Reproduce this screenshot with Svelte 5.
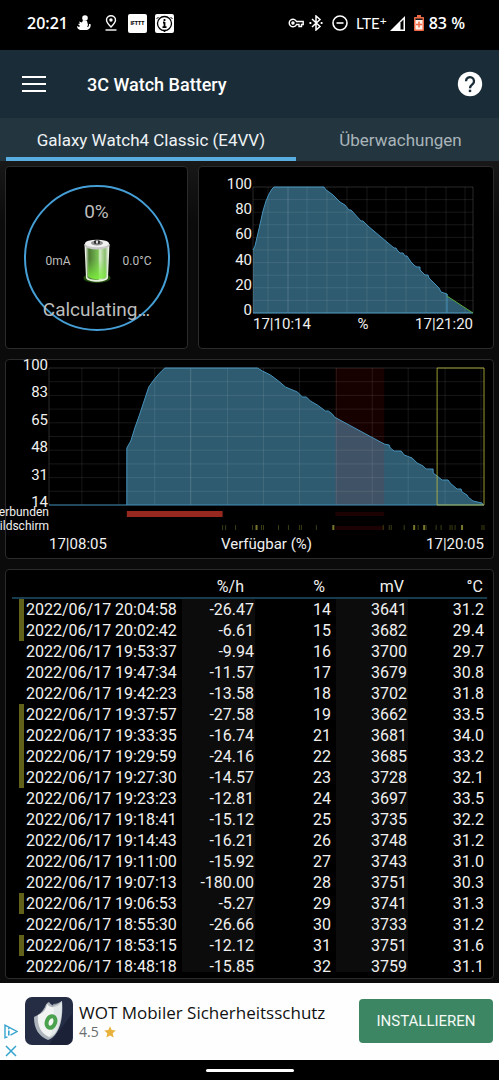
<script>
  // Plot coordinates: 220 x 126 for the forecast, 436 x 137 for the history
  const forecastLine =
    "0,63 2,59 5,46 8,33 10,24 13,14 16,7 19,2 21,0 71,0 73,3 76,5 80,8 87,15 92,18 96,23 98,23 108,34 110,34 115,39 141,61 143,61 144,63 147,66 150,66 152,69 154,69 158,75 162,79 164,80 167,80 167,83 172,88 175,88 176,91 179,94 182,97 186,101 188,105 194,107 194,109";
  const forecastGrid = [15, 54, 74, 94, 114, 133, 153, 173, 193, 212];
  const forecastTicks = [100, 80, 60, 40, 20, 0];

  const historyLine =
    "78,137 78,80 82,73 86,60 91,46 96,31 100,19 105,12 110,6 116,0 209,0 214,3 222,7 230,13 237,19 249,24 254,29 258,29 262,33 269,37 277,43 280,43 284,46 286,49 336,76 341,77 342,80 346,83 353,83 356,87 364,90 369,95 375,98 378,101 385,101 385,105 389,108 394,112 400,112 402,115 409,121 413,121 414,124 419,127 420,129 425,133 434,135 435,137";
  const historyGrid = [33, 70, 106, 179, 215, 251, 288, 324, 360, 397, 433];
  const historyTicks = [100, 83, 65, 48, 31, 14];

  const screenOn = [174, 177, 187, 204, 213, 215, 230, 240, 251, 253, 268, 335, 341, 343, 356, 370, 378, 388, 393, 402, 404, 407, 434, 436];
  const screenBusy = [208, 285, 366, 376, 414];

  const tenths = [1, 2, 3, 4, 5, 6, 7, 8, 9];

  // time, %/h, %, mV, °C, screen on
  const rows = [
    ["2022/06/17 20:04:58", "-26.47", 14, 3641, "31.2", true],
    ["2022/06/17 20:02:42", "-6.61", 15, 3682, "29.4", true],
    ["2022/06/17 19:53:37", "-9.94", 16, 3700, "29.7", false],
    ["2022/06/17 19:47:34", "-11.57", 17, 3679, "30.8", false],
    ["2022/06/17 19:42:23", "-13.58", 18, 3702, "31.8", false],
    ["2022/06/17 19:37:57", "-27.58", 19, 3662, "33.5", true],
    ["2022/06/17 19:33:35", "-16.74", 21, 3681, "34.0", true],
    ["2022/06/17 19:29:59", "-24.16", 22, 3685, "33.2", true],
    ["2022/06/17 19:27:30", "-14.57", 23, 3728, "32.1", true],
    ["2022/06/17 19:23:23", "-12.81", 24, 3697, "33.5", false],
    ["2022/06/17 19:18:41", "-15.12", 25, 3735, "32.2", false],
    ["2022/06/17 19:14:43", "-16.21", 26, 3748, "31.2", false],
    ["2022/06/17 19:11:00", "-15.92", 27, 3743, "31.0", false],
    ["2022/06/17 19:07:13", "-180.00", 28, 3751, "30.3", false],
    ["2022/06/17 19:06:53", "-5.27", 29, 3741, "31.3", true],
    ["2022/06/17 18:55:30", "-26.66", 30, 3733, "31.2", false],
    ["2022/06/17 18:53:15", "-12.12", 31, 3751, "31.6", true],
    ["2022/06/17 18:48:18", "-15.85", 32, 3759, "31.1", false],
  ];

  let tab = "watch";
</script>

<div class="app">
  <div class="status">
    <span class="status__time">20:21</span>
    <svg class="status__icon status__icon--first" width="14" height="16" viewBox="0 0 14 16" fill="#fff">
      <circle cx="8" cy="3" r="2.8" />
      <path d="M6 5l4 1 1 4-1 2c2 0 2-1 2-3l1.500 0c.6 3-.5 5-3.500 6H3c-2-1-3-2-3-4l2 1 1-1-2-2 2-.5-1-2 3 1z" />
    </svg>
    <svg class="status__icon" width="12" height="16" viewBox="0 0 12 16" fill="none" stroke="#fff" stroke-width="1.400">
      <path d="M6 12C3 9 1.500 7 1.500 5a4.500 4.200 0 0 1 9 0c0 2-1.500 4-4.500 7z" />
      <circle cx="6" cy="5" r="1" fill="#fff" />
      <path d="M.5 15h11" />
    </svg>
    <span class="status__ifttt">IFTTT</span>
    <svg class="status__icon" width="19" height="19" viewBox="0 0 19 19">
      <rect width="19" height="19" rx="2" fill="#fff" />
      <circle cx="9.500" cy="9.500" r="7" fill="none" stroke="#000" stroke-width="1.300" />
      <path d="M1.500 5l2-2M17.500 5l-2-2M8.500 16.500l1 1.500 1-1.500z" stroke="#000" />
      <path d="M9.500 5v2M9.500 8v5M8 8.500h1.500M7.500 13.200h4" stroke="#000" stroke-width="1.800" />
    </svg>

    <span class="status__spacer"></span>

    <svg width="16" height="10" viewBox="0 0 16 10" fill="none" stroke="#fff" stroke-width="1.400">
      <path d="M8.500 3.500h6.700v3h-1.700v2h-2.500v-2H8.500a3.800 3.800 0 1 1 0-3z" />
      <circle cx="5" cy="5" r="1" fill="#fff" />
    </svg>
    <svg class="status__bt" width="14" height="16" viewBox="0 0 14 16" fill="none" stroke="#fff" stroke-width="1.500">
      <path d="M3 4l8 7.500L7 15V1l4 3.500L3 12" />
      <path d="M.5 8h1.800M11.700 8h1.800" stroke-width="1.800" />
    </svg>
    <svg class="status__dnd" width="16" height="16" viewBox="0 0 16 16" fill="none" stroke="#fff" stroke-width="1.600">
      <circle cx="8" cy="8" r="7" />
      <path d="M4.500 8h7" />
    </svg>
    <span class="status__lte">LTE<sup>+</sup></span>
    <svg class="status__signal" width="15" height="15" viewBox="0 0 15 15">
      <path d="M0 15L15 0V15z" fill="#fff" />
      <path d="M10.500 6.500L13.500 3.500V13.500H10.500z" fill="#000" />
    </svg>
    <svg class="status__cell" width="10" height="16" viewBox="0 0 10 16">
      <path d="M3 0h4v2h2.200q.8 0 .8.800v12.400q0 .8-.8.800H.8q-.8 0-.8-.8V2.800Q0 2 .8 2H3z" fill="#ec6a45" />
      <path d="M1.500 3.500h7v1.500h-7z" fill="#1a1a1a" />
      <path d="M1.500 5h7v9.500h-7z" fill="#fff0ea" />
      <path d="M5 6.500v6M2 9.500h6" stroke="#ec6a45" stroke-width="1.500" />
    </svg>
    <span class="status__level">83 %</span>
  </div>

  <header class="bar">
    <button class="bar__btn" aria-label="Menu">
      <svg width="24" height="18" viewBox="0 0 24 18" stroke="#fff" stroke-width="2">
        <path d="M0 2h24M0 9h24M0 16h24" />
      </svg>
    </button>
    <h1 class="bar__title">3C Watch Battery</h1>
    <button class="bar__btn" aria-label="Help">
      <svg width="26" height="26" viewBox="0 0 26 26">
        <circle cx="13" cy="13" r="12.200" fill="#fff" />
        <path d="M9 10.200a4 4 0 1 1 6.600 3c-1.700 1.400-2.600 2-2.600 4" fill="none" stroke="#1a2c37" stroke-width="2.300" />
        <path d="M11.800 18.700h2.400v2.400h-2.400z" fill="#1a2c37" />
      </svg>
    </button>
  </header>

  <nav class="tabs">
    <button class="tab" class:tab--active={tab === "watch"} on:click={() => (tab = "watch")}>
      Galaxy Watch4 Classic (E4VV)
    </button>
    <button class="tab" class:tab--active={tab === "monitors"} on:click={() => (tab = "monitors")}>
      Überwachungen
    </button>
  </nav>

  <main class="content">
    <div class="top">
      <section class="card card--gauge">
        <div class="gauge">
          <span class="gauge__big">0%</span>
          <div class="gauge__mid">
            <span>0mA</span>
            <svg width="28" height="46" viewBox="0 0 28 46">
              <defs>
                <linearGradient id="body" x1="0" x2="1">
                  <stop offset="0" stop-color="#e4e8e0" />
                  <stop offset=".15" stop-color="#4c7a33" />
                  <stop offset=".55" stop-color="#7cc255" />
                  <stop offset=".62" stop-color="#d5eec8" />
                  <stop offset=".85" stop-color="#89bd6c" />
                  <stop offset="1" stop-color="#f4f4f4" />
                </linearGradient>
                <linearGradient id="glow" x1="0" y1="0" x2="0" y2="1">
                  <stop offset=".4" stop-color="#6fe03a" stop-opacity="0" />
                  <stop offset="1" stop-color="#7dee3c" stop-opacity=".9" />
                </linearGradient>
              </defs>
              <ellipse cx="14" cy="40" rx="13.500" ry="5" fill="#2d6b10" opacity=".7" />
              <path d="M1.500 6l1.500 34c2 5 20 5 22 0L26.500 6z" fill="#e8f3e0" />
              <path d="M2.500 8l1.500 31c2 4 18 4 20 0L25.500 8z" fill="url(#body)" />
              <path d="M4 8l1 30c2 4 16 4 18 0L24 8z" fill="url(#glow)" />
              <ellipse cx="14" cy="7" rx="12.500" ry="4.500" fill="#c8c8c8" />
              <ellipse cx="14" cy="5.500" rx="12" ry="3.800" fill="#f1f1f1" />
              <ellipse cx="14" cy="5" rx="6" ry="2.400" fill="#929292" />
              <path d="M11 3q3-2 6 0v2.500q-3 1.500-6 0z" fill="#333" />
              <path d="M13 2.500h2v3h-2z" fill="#ddd" />
            </svg>
            <span>0.0°C</span>
          </div>
          <span class="gauge__big">Calculating…</span>
        </div>
      </section>

      <section class="card card--forecast chart">
        <div class="chart__ticks">
          {#each forecastTicks as t}<span>{t}</span>{/each}
        </div>
        <svg class="plot plot--forecast" viewBox="0 0 220 126" preserveAspectRatio="none">
          <polygon class="area" points="{forecastLine} 220,126 0,126" />
          <path class="grid" d={forecastGrid.map((x) => `M${x} 0V126`).join("") + tenths.map((n) => `M0 ${n * 12.6}H220`).join("")} />
          <path class="grid grid--strong" d="M0 0H220V126H0zM35 0V126" />
          <polyline class="line" points={forecastLine} />
          <path class="line" d="M194 107V126M0 126H220" />
          <path class="line line--forecast" d="M194 109L220 126" />
        </svg>
        <div class="chart__axis"><span>17|10:14</span><span>%</span><span>17|21:20</span></div>
      </section>
    </div>

    <section class="card card--history chart">
      <div class="chart__ticks">
        {#each historyTicks as t}<span>{t}</span>{/each}
      </div>
      <svg class="plot plot--history" viewBox="0 0 436 137" preserveAspectRatio="none">
        <polygon class="area" points="{historyLine} 78,137" />
        <rect class="gap" x="287" y="0" width="49" height="137" />
        <path class="grid" d={historyGrid.map((x) => `M${x} 0V137`).join("") + tenths.map((n) => `M0 ${n * 13.7}H436`).join("")} />
        <path class="grid grid--strong" d="M0 0H436M0 0V137M142 0V137" />
        <polyline class="line" points={historyLine} />
        <path class="line" d="M0 137H436" />
        <rect class="window" x="389" y="0" width="47" height="137" />
      </svg>

      <span class="chart__track">Verbunden</span>
      <svg class="plot plot--track" viewBox="0 0 436 14" preserveAspectRatio="none">
        <rect x="78" y="6" width="96" height="6" fill="#96281f" />
        <rect x="287" y="7" width="49" height="4" fill="#1c0203" />
      </svg>

      <span class="chart__track">Bildschirm</span>
      <svg class="plot plot--track" viewBox="0 0 436 14" preserveAspectRatio="none">
        <rect x="287" y="7" width="49" height="4" fill="#1c0203" />
        <path d={screenOn.map((x) => `M${x} 6v5`).join("")} stroke="#3c3d12" stroke-width="1" />
        <path d={screenBusy.map((x) => `M${x} 6v5`).join("")} stroke="#77762a" stroke-width="2" />
      </svg>

      <div class="chart__axis"><span>17|08:05</span><span>Verfügbar (%)</span><span>17|20:05</span></div>
    </section>

    <section class="card card--list">
      <div class="scroll">
        <table>
          <colgroup>
            <col /><col class="c-rate" /><col class="c-level" /><col class="c-volt" /><col class="c-temp" />
          </colgroup>
          <thead>
            <tr><th></th><th>%/h</th><th>%</th><th>mV</th><th>°C</th></tr>
          </thead>
          <tbody>
            {#each rows as [time, rate, level, volt, temp, on]}
              <tr class:on>
                <td>{time}</td>
                <td>{rate}</td>
                <td>{level}</td>
                <td>{volt}</td>
                <td>{temp}</td>
              </tr>
            {/each}
          </tbody>
        </table>
      </div>
    </section>
  </main>

  <aside class="ad">
    <div class="ad__marks">
      <button aria-label="AdChoices">
        <svg width="14" height="15" viewBox="0 0 14 15" fill="none" stroke="#35a3cf" stroke-width="1.400">
          <path d="M3.500 12.800L1 13.800V1.200L13 7.500 6.500 11.200" />
          <path d="M4.800 6.500v5M4.800 3.800v1.500" stroke-width="1.600" />
        </svg>
      </button>
      <button aria-label="Close ad">
        <svg width="12" height="12" viewBox="0 0 12 12" stroke="#35a3cf" stroke-width="1.500">
          <path d="M1 1l10 10M11 1L1 11" />
        </svg>
      </button>
    </div>
    <svg class="ad__logo" width="48" height="48" viewBox="0 0 48 48">
      <rect width="48" height="48" rx="7" fill="#252d45" />
      <path d="M27 43L47 17v24q0 7-7 7H24z" fill="#1b2238" />
      <path d="M9 20c5-2 8-5 11-10 1-3 2-4 4-5 2 3 4 4 7 3 3-1 4-3 6-4 1 10 0 23-5 31-3 5-6 7-9 8C13 39 9 31 9 20z" fill="#aeb4bc" />
      <path d="M13 18c5-2 8-5 9-11 4 5 10 4 15-2 0 10-1 20-5 28-2 4-5 6-8 7-8-4-12-11-11-22z" fill="#f2f4f4" />
      <path d="M28 7c3 0 6-1 9-3 0 11 0 22-5 30-2 4-5 6-8 7 5-9 6-22 4-34z" fill="#d9dfdf" opacity=".6" />
      <ellipse cx="26" cy="25" rx="4.200" ry="6" transform="rotate(20 26 25)" fill="#f4f7f4" stroke="#4ba24e" stroke-width="4" />
    </svg>
    <div class="ad__text">
      <span class="ad__title">WOT Mobiler Sicherheitsschutz</span>
      <span class="ad__rating">
        4.5
        <svg width="12" height="12" viewBox="0 0 12 12">
          <path d="M6 .3l1.700 3.800 4.100.4-3.100 2.800.9 4.200L6 9.400l-3.600 2.100.9-4.200L.2 4.500l4.100-.4z" fill="#e8b23c" />
        </svg>
      </span>
    </div>
    <button class="ad__install">INSTALLIEREN</button>
  </aside>

  <div class="home"><span></span></div>
</div>

<style>
  :global(body) {
    background: #000;
  }

  .app {
    display: flex;
    flex-direction: column;
    height: 100vh;
    overflow: hidden;
    background: #000;
    color: #f0f0f0;
    font-family: Roboto, "Liberation Sans", sans-serif;
    font-size: 16px;
  }

  button {
    margin: 0;
    padding: 0;
    border: none;
    background: none;
    color: inherit;
    font: inherit;
    cursor: pointer;
  }

  svg {
    display: block;
    flex: none;
  }

  /* ---------- status bar ---------- */
  .status {
    display: flex;
    align-items: center;
    flex: none;
    height: 50px;
    padding: 0 34px 4px 27px;
    box-sizing: border-box;
    color: #fff;
    font-family: "Open Sans", sans-serif;
    font-size: 16px;
    font-weight: 600;
    line-height: 20px;
  }

  .status__icon {
    margin-right: 8px;
  }

  .status__icon--first {
    margin: 0 14px 0 9px;
  }

  .status__ifttt {
    width: 19px;
    margin: 0 8px 0 3px;
    border-radius: 2px;
    background: #fff;
    color: #000;
    font: 900 5px/19px Roboto, sans-serif;
    text-align: center;
  }

  .status__spacer {
    flex: 1;
  }

  .status__bt {
    margin-left: 5px;
  }

  .status__dnd {
    margin: 0 8px 0 9px;
  }

  .status__lte {
    font-family: Lato, sans-serif;
    font-size: 15px;
    font-weight: 400;
  }

  .status__lte sup {
    font-size: 12px;
    line-height: 0;
    vertical-align: 4px;
  }

  .status__signal {
    margin: 0 9px 0 3px;
  }

  .status__cell {
    margin-right: 5px;
  }

  /* ---------- app bar ---------- */
  .bar {
    display: flex;
    align-items: center;
    flex: none;
    height: 68px;
    padding: 0 16px 0 22px;
    background: #1a2c37;
  }

  .bar__title {
    flex: 1;
    margin: 0 0 0 41px;
    padding-top: 2px;
    color: #fff;
    font-size: 18px;
    font-weight: 500;
    line-height: 24px;
  }

  .tabs {
    display: grid;
    grid-template-columns: 302fr 197fr;
    flex: none;
    height: 43px;
    background: #233640;
  }

  .tab {
    margin: 0 6px;
    padding-top: 5px;
    border-bottom: 4px solid transparent;
    color: #aab4b9;
    font-size: 17px;
    line-height: 20px;
    white-space: nowrap;
  }

  .tab--active {
    border-color: #58aee0;
    color: #eef2f4;
  }

  /* ---------- cards ---------- */
  .content {
    display: flex;
    flex: 1;
    flex-direction: column;
    gap: 10px;
    min-height: 0;
    padding: 5px 5px 4px;
    background: linear-gradient(#181818, #0b0b0b 60px);
  }

  .top {
    display: grid;
    grid-template-columns: 183fr 296fr;
    gap: 10px;
  }

  .card {
    box-sizing: border-box;
    border: 1px solid #2b2b2b;
    border-radius: 4px;
    background: #000;
  }

  .card--gauge {
    display: grid;
    place-items: center;
    height: 183px;
  }

  .card--forecast {
    --ticks: 54px;
    height: 183px;
    padding: 20px 20px 0 0;
  }

  .card--history {
    --ticks: 43px;
    height: 200px;
    padding: 8px 9px 0 0;
  }

  .card--list {
    display: flex;
    flex: 1;
    min-height: 0;
    padding: 0 6px 6px;
  }

  /* ---------- gauge ---------- */
  .gauge {
    display: flex;
    flex-direction: column;
    align-items: center;
    justify-content: space-between;
    width: 146px;
    height: 146px;
    padding: 13px 0 7px;
    box-sizing: border-box;
    border: 2px solid #459fd6;
    border-radius: 50%;
    color: #bdbdbd;
  }

  .gauge__big {
    font-size: 19px;
    line-height: 24px;
  }

  .gauge__mid {
    display: grid;
    grid-template-columns: 1fr 28px 1fr;
    gap: 12px;
    align-items: center;
    width: 112px;
    font-size: 12px;
  }

  .gauge__mid span:first-child {
    justify-self: end;
  }

  /* ---------- charts ---------- */
  .chart {
    display: grid;
    grid-template-columns: var(--ticks) 1fr;
    align-content: start;
    font-size: 15px;
    line-height: 16px;
  }

  .chart__ticks {
    display: flex;
    flex-direction: column;
    align-items: flex-end;
    justify-content: space-between;
    margin: -11px 0 -5px;
    padding-right: 1px;
  }

  .chart__track {
    justify-self: end;
    font-size: 12px;
    line-height: 14px;
  }

  .chart__axis {
    display: flex;
    grid-column: 2;
    justify-content: space-between;
    margin-top: 3px;
  }

  .plot {
    width: 100%;
    overflow: visible;
  }

  .plot--forecast {
    height: 126px;
  }

  .plot--history {
    height: 137px;
  }

  .plot--track {
    height: 14px;
  }

  .area {
    fill: #2e5b70;
  }

  .grid,
  .line,
  .window {
    fill: none;
    stroke-width: 1px;
    vector-effect: non-scaling-stroke;
  }

  .grid {
    stroke: rgba(255, 255, 255, 0.09);
  }

  .grid--strong {
    stroke: rgba(255, 255, 255, 0.16);
  }

  .line {
    stroke: #4592bb;
  }

  .line--forecast {
    stroke: #56a83c;
  }

  .gap {
    fill: rgba(255, 0, 0, 0.09);
  }

  .window {
    stroke: rgba(190, 190, 60, 0.8);
  }

  /* ---------- list ---------- */
  .scroll {
    flex: 1;
    overflow-y: auto;
    scrollbar-width: none;
  }

  table {
    width: 100%;
    border-spacing: 0;
    table-layout: fixed;
  }

  .c-rate {
    width: 73px;
  }

  .c-level {
    width: 81px;
  }

  .c-volt {
    width: 72px;
  }

  .c-temp {
    width: 79px;
  }

  th {
    position: sticky;
    top: 0;
    height: 29px;
    padding: 6px 11px 0 0;
    box-sizing: border-box;
    border-bottom: 2px solid #173c4e;
    background: #000;
    font-weight: 400;
    line-height: 20px;
    text-align: right;
  }

  th:nth-child(4) {
    padding-right: 4px;
  }

  th:last-child {
    padding-right: 4px;
  }

  td {
    height: 21px;
    padding: 0;
    line-height: 21px;
    text-align: right;
    white-space: nowrap;
  }

  td:first-child {
    padding-left: 14px;
    text-align: left;
  }

  td:nth-child(2),
  td:nth-child(4) {
    padding-right: 1px;
    background: #0c0c0c;
  }

  td:nth-child(3) {
    padding-right: 5px;
  }

  td:last-child {
    padding-right: 3px;
  }

  .on td:first-child {
    background: linear-gradient(#62611a, #62611a) 7px 0 / 5px 100% no-repeat;
  }

  /* ---------- ad ---------- */
  .ad {
    display: flex;
    align-items: center;
    flex: none;
    height: 77px;
    padding-right: 6px;
    box-sizing: border-box;
    background: #fefefe;
    color: #111;
  }

  .ad__marks {
    display: flex;
    flex-direction: column;
    align-items: center;
    align-self: flex-end;
    gap: 6px;
    width: 21px;
    padding-bottom: 3px;
  }

  .ad__logo {
    margin: 0 6px 2px 4px;
  }

  .ad__text {
    display: flex;
    flex: 1;
    flex-direction: column;
    font-family: "Open Sans", sans-serif;
    white-space: nowrap;
  }

  .ad__title {
    font-size: 17px;
    font-weight: 500;
    line-height: 20px;
  }

  .ad__rating {
    display: flex;
    align-items: center;
    gap: 5px;
    color: #6a6d70;
    font-size: 14px;
    line-height: 18px;
  }

  .ad__install {
    width: 134px;
    height: 44px;
    margin-bottom: 2px;
    border-radius: 4px;
    background: #3d8664;
    color: #f4faf6;
    font-size: 15px;
  }

  .home {
    display: grid;
    flex: none;
    place-items: center;
    height: 20px;
  }

  .home span {
    width: 88px;
    height: 3px;
    border-radius: 2px;
    background: #fff;
  }
</style>
